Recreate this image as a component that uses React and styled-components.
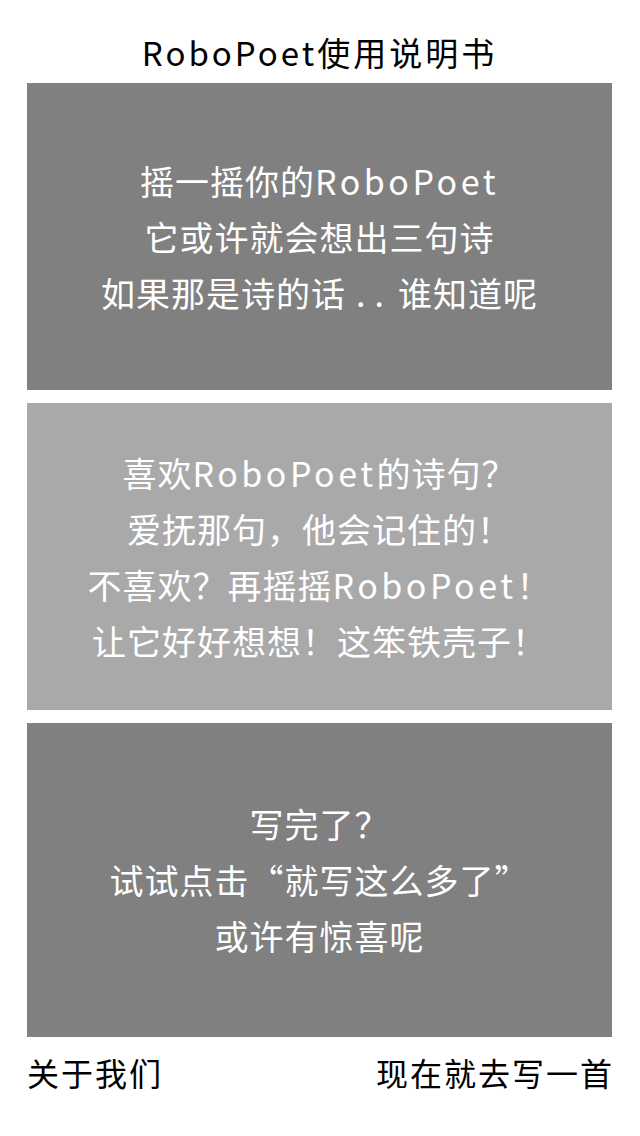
import React from 'react';
import styled, { createGlobalStyle } from 'styled-components';

const GlobalStyle = createGlobalStyle`
  html, body {
    margin: 0;
    padding: 0;
    background: #ffffff;
  }
  body {
    font-family: 'Noto Sans CJK SC', 'Noto Sans', sans-serif;
  }
`;

const Page = styled.div`
  width: 640px;
  box-sizing: border-box;
  padding: 0 28px 0 27px;
  display: flex;
  flex-direction: column;
`;

const Title = styled.h1`
  margin: 0;
  padding-top: 24px;
  height: 59px;
  line-height: 56px;
  font-size: 33px;
  font-weight: 400;
  letter-spacing: 3px;
  text-align: center;
  color: #000;
`;

const Panel = styled.section`
  height: ${(p) => p.h}px;
  margin-bottom: 13px;
  background: ${(p) => (p.light ? '#a9a9a9' : '#808080')};
  display: flex;
  flex-direction: column;
  align-items: center;
  justify-content: center;
`;

const Line = styled.p`
  margin: 0;
  font-size: 34px;
  line-height: 56px;
  letter-spacing: 1px;
  color: #ffffff;
  white-space: nowrap;
`;

// the robot's name is set a little wider than the rest of the line
const Brand = styled.span`
  letter-spacing: 3.5px;
`;

const Dots = styled.span`
  letter-spacing: 9px;
  padding: 0 5px 0 10px;
`;

const Footer = styled.nav`
  display: flex;
  justify-content: space-between;
  align-items: center;
  height: 44px;
  margin-right: -2px;
`;

const FooterLink = styled.a`
  font-size: 32px;
  letter-spacing: 2px;
  line-height: 44px;
  color: #000;
  text-decoration: none;
  cursor: pointer;
`;

const renderLine = (text) =>
  text.split(/(RoboPoet|\.\.)/).map((part, i) => {
    if (part === 'RoboPoet') return <Brand key={i}>{part}</Brand>;
    if (part === '..') return <Dots key={i}>{part}</Dots>;
    return part;
  });

const panels = [
  {
    h: 307,
    lines: ['摇一摇你的RoboPoet', '它或许就会想出三句诗', '如果那是诗的话..谁知道呢'],
  },
  {
    h: 307,
    light: true,
    lines: [
      '喜欢RoboPoet的诗句？',
      '爱抚那句，他会记住的！',
      '不喜欢？再摇摇RoboPoet！',
      '让它好好想想！这笨铁壳子！',
    ],
  },
  {
    h: 314,
    lines: ['写完了？', '试试点击“就写这么多了”', '或许有惊喜呢'],
  },
];

export default function App() {
  return (
    <>
      <GlobalStyle />
      <Page>
        <Title>RoboPoet使用说明书</Title>
        {panels.map((panel, i) => (
          <Panel key={i} h={panel.h} light={panel.light}>
            {panel.lines.map((line) => (
              <Line key={line}>{renderLine(line)}</Line>
            ))}
          </Panel>
        ))}
        <Footer>
          <FooterLink>关于我们</FooterLink>
          <FooterLink>现在就去写一首</FooterLink>
        </Footer>
      </Page>
    </>
  );
}
